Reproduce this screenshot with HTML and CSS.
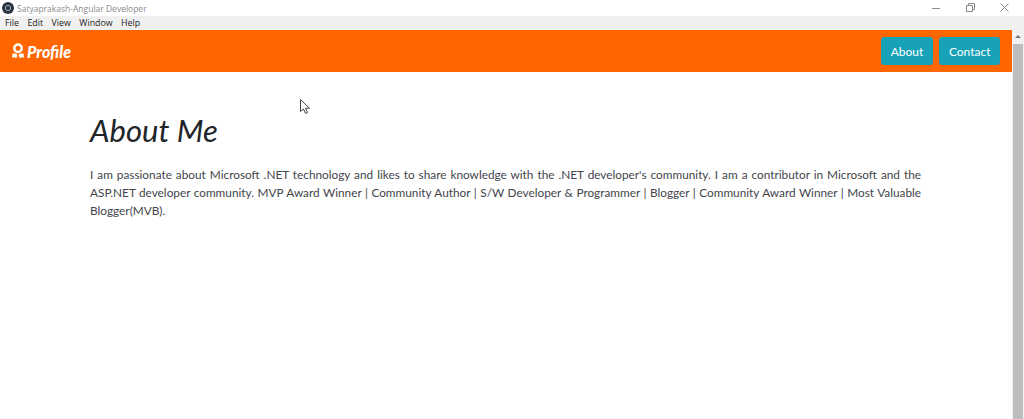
FILE: index.html
```html
<!DOCTYPE html>
<html lang="en">
<head>
    <meta charset="UTF-8">
    <meta name="viewport" content="width=device-width, initial-scale=1.0">
    <title>Satyaprakash-Angular Developer</title>
    <link rel="stylesheet" href="styles.css">
</head>
<body>
    <div class="titlebar">
        <div class="app-title">
            <svg class="app-icon" width="12" height="12" viewBox="0 0 12 12">
                <circle cx="6" cy="6" r="6" fill="#2b3440"/>
                <circle cx="6" cy="6" r="2.6" fill="none" stroke="#9fb2c4" stroke-width="1"/>
            </svg>
            <span>Satyaprakash-Angular Developer</span>
        </div>
        <div class="window-controls">
            <svg width="10" height="10" viewBox="0 0 10 10"><path d="M0 5.5h8" stroke="#8a8a8a" fill="none"/></svg>
            <svg width="10" height="10" viewBox="0 0 10 10"><path d="M.5 2.5h6v6h-6zM2.500 2.500v-2h6v6h-2" stroke="#8a8a8a" fill="none"/></svg>
            <svg width="10" height="10" viewBox="0 0 10 10"><path d="M.5.500l8 8M8.500.500l-8 8" stroke="#8a8a8a" fill="none"/></svg>
        </div>
    </div>
    <div class="menubar">
        <span>File</span>
        <span>Edit</span>
        <span>View</span>
        <span>Window</span>
        <span>Help</span>
    </div>
    <div class="viewport">
        <div class="page">
            <nav class="navbar">
                <a class="brand">
                    <svg width="14" height="16" viewBox="0 0 14 16">
                        <circle cx="7" cy="5.200" r="3.700" fill="none" stroke="#fff" stroke-width="2.400"/>
                        <path d="M1.500 10.500h4l1 2-1.500 3-1-1.200-3 .2zM12.500 10.500h-4l-1 2 1.500 3 1-1.200 3 .2z" fill="#fff"/>
                    </svg>
                    <span>Profile</span>
                </a>
                <div class="nav-buttons">
                    <button>About</button>
                    <button>Contact</button>
                </div>
            </nav>
            <main class="content">
                <h1>About Me</h1>
                <p>I am passionate about Microsoft .NET technology and likes to share knowledge with the .NET developer's community. I am a contributor in Microsoft and the ASP.NET developer community. MVP Award Winner | Community Author | S/W Developer &amp; Programmer | Blogger | Community Award Winner | Most Valuable Blogger(MVB).</p>
            </main>
        </div>
        <div class="scrollbar">
            <div class="arrow"></div>
            <div class="thumb"></div>
        </div>
    </div>
    <svg class="cursor" width="11" height="16" viewBox="0 0 11 16">
        <path d="M.5.500v12l3-2.500 2 4.500 2-1-2-4.300h4z" fill="#fff" stroke="#444"/>
    </svg>
</body>
</html>
```

FILE: styles.css
```css
* {
    margin: 0;
    padding: 0;
    box-sizing: border-box;
}

html,
body {
    height: 100%;
    overflow: hidden;
}

body {
    display: flex;
    flex-direction: column;
    background-color: #fff;
    font-family: Lato, "Open Sans", sans-serif;
}

.titlebar {
    display: flex;
    justify-content: space-between;
    align-items: center;
    height: 16px;
    background-color: #fff;
}

.app-title {
    display: flex;
    align-items: center;
    gap: 3px;
    padding-left: 2px;
    font-family: "Open Sans", sans-serif;
    font-size: 8.500px;
    color: #8c8c8c;
}

.window-controls {
    display: flex;
    gap: 24px;
    padding-right: 14px;
}

.menubar {
    display: flex;
    gap: 8.500px;
    align-items: center;
    height: 14px;
    padding-left: 5px;
    background-color: #f0f0f0;
    font-family: "Open Sans", sans-serif;
    font-size: 8.800px;
    color: #222;
}

.viewport {
    display: flex;
    flex: 1;
    min-height: 0;
}

.page {
    flex: 1;
}

.navbar {
    display: flex;
    justify-content: space-between;
    align-items: center;
    height: 42px;
    padding: 0 12px 0 11px;
    background-color: #ff6600;
}

.brand {
    display: flex;
    align-items: center;
    gap: 2px;
    color: #fff;
    font-size: 16px;
    font-weight: 900;
    font-style: italic;
}

.nav-buttons {
    display: flex;
    gap: 6.500px;
}

button {
    height: 28px;
    padding: 0 9.500px;
    border: none;
    border-radius: 3px;
    background-color: #17a2b8;
    color: #fff;
    font-family: Lato, sans-serif;
    font-size: 12px;
}

.content {
    padding: 40px 91px 0 90px;
}

h1 {
    font-size: 31px;
    font-weight: 400;
    font-style: italic;
    line-height: 37px;
    color: #212529;
}

p {
    margin-top: 17px;
    font-size: 11.800px;
    line-height: 18px;
    color: #3f454b;
    text-align: justify;
}

.scrollbar {
    display: flex;
    flex-direction: column;
    align-items: center;
    width: 12px;
    background-color: #f1f1f1;
}

.arrow {
    margin: 5px 0 6px;
    border-left: 3px solid transparent;
    border-right: 3px solid transparent;
    border-bottom: 3px solid #777;
}

.thumb {
    flex: 1;
    width: 10px;
    background-color: #bdbdbd;
}

.cursor {
    position: absolute;
    left: 300px;
    top: 99px;
}
```
